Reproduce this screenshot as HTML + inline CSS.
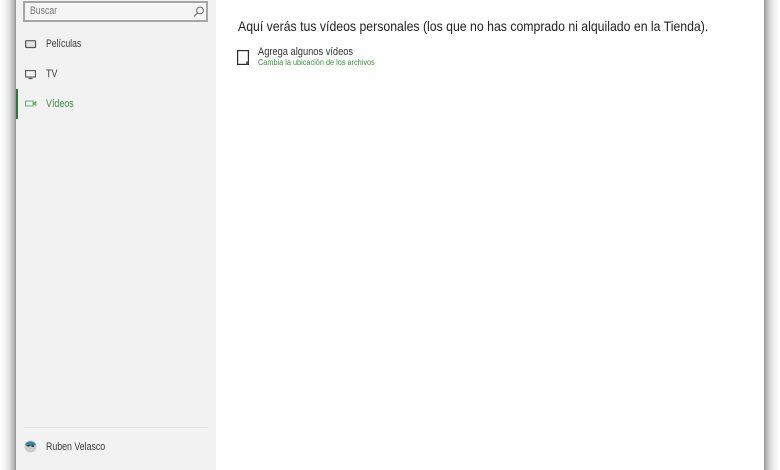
<!DOCTYPE html>
<html lang="es">
<head>
<meta charset="utf-8">
<title>Vídeos</title>
<style>
html,body{margin:0;padding:0;background:#fff;}
body{position:relative;width:780px;height:470px;overflow:hidden;font-family:"Liberation Sans",sans-serif;}
.abs{position:absolute;white-space:nowrap;transform-origin:left top;}
#shl{left:0;top:0;width:16px;height:470px;background:linear-gradient(to right,#fff 0%,#f6f6f6 30%,#dedede 60%,#b8b8b8 85%,#949494 100%);}
#shr{left:764px;top:0;width:16px;height:470px;background:linear-gradient(to left,#fff 0%,#f6f6f6 30%,#dedede 60%,#b8b8b8 85%,#949494 100%);}
#side{left:16px;top:0;width:200px;height:470px;background:#f2f2f2;}
#search{left:23px;top:1px;width:181px;height:17px;border:2px solid #a6a6a6;background:#f5f5f5;}
.nav{font-size:11px;color:#3a3a3a;filter:blur(.25px);}
svg{position:absolute;overflow:visible;filter:blur(.25px);}
</style>
</head>
<body>
<div class="abs" id="shl"></div>
<div class="abs" id="shr"></div>
<div class="abs" id="side"></div>

<div class="abs" id="search"></div>
<div class="abs" style="left:30px;top:5px;font-size:11px;color:#777;transform:scaleX(.79);filter:blur(.25px);">Buscar</div>
<svg style="left:192px;top:5px" width="14" height="14" viewBox="0 0 14 14"><circle cx="8" cy="5.500" r="3.400" fill="none" stroke="#666" stroke-width="1"/><path d="M5.500 8L2 11.500" stroke="#666" stroke-width="1.100" fill="none"/></svg>

<svg style="left:25px;top:40px" width="12" height="9" viewBox="0 0 12 9"><rect x=".7" y=".7" width="9.800" height="6.800" rx=".5" fill="#e4e4e4" stroke="#555" stroke-width="1.200"/></svg>
<div class="abs nav" style="left:45.500px;top:37.500px;transform:scaleX(.79);">Películas</div>

<svg style="left:25px;top:70px" width="12" height="10" viewBox="0 0 12 10"><rect x=".6" y=".6" width="9.800" height="6.400" fill="none" stroke="#555" stroke-width="1.100"/><path d="M3.500 8.500H7.500" stroke="#555" stroke-width="1.200"/></svg>
<div class="abs nav" style="left:45.500px;top:67.500px;transform:scaleX(.81);">TV</div>

<div class="abs" style="left:16px;top:89px;width:2px;height:30px;background:#2b7a2f;"></div>
<svg style="left:25px;top:100px" width="12" height="8" viewBox="0 0 12 8"><rect x=".5" y="1" width="7.500" height="5" fill="none" stroke="#6ab06e" stroke-width="1"/><path d="M8 3L11 1.500V5.500L8 4Z" fill="#6ab06e" stroke="#6ab06e" stroke-width=".8"/></svg>
<div class="abs nav" style="left:45.500px;top:97.500px;color:#3a8f40;transform:scaleX(.81);">Vídeos</div>

<div class="abs" style="left:24px;top:427px;width:184px;height:1px;background:#e6e6e6;"></div>
<svg style="left:24px;top:440px" width="13" height="13" viewBox="0 0 13 13"><circle cx="6.500" cy="6.500" r="6" fill="#c9cccc"/><path d="M1 5A6 6 0 0 1 12 5L9 6H3Z" fill="#3f7f9f"/><rect x="3.500" y="5" width="2" height="1.500" fill="#222"/><rect x="7.500" y="5.500" width="2.500" height="1.500" fill="#222"/></svg>
<div class="abs nav" style="left:45.500px;top:440.500px;transform:scaleX(.80);">Ruben Velasco</div>

<div class="abs" style="left:237.500px;top:18px;font-size:14px;color:#222;transform:scaleX(.877);filter:blur(.2px);">Aquí verás tus vídeos personales (los que no has comprado ni alquilado en la Tienda).</div>

<svg style="left:237px;top:50px" width="13" height="16" viewBox="0 0 13 16"><rect x=".6" y=".6" width="10.800" height="13.800" fill="none" stroke="#2a2a2a" stroke-width="1.200"/><rect x="9" y="11.500" width="2.400" height="3" fill="#555"/></svg>
<div class="abs" style="left:257.500px;top:45.500px;font-size:11px;color:#333;transform:scaleX(.845);filter:blur(.2px);">Agrega algunos vídeos</div>
<div class="abs" style="left:257.500px;top:58px;font-size:8px;color:#2e9a35;transform:scaleX(.915);filter:blur(.2px);">Cambia la ubicación de los archivos</div>
</body>
</html>
